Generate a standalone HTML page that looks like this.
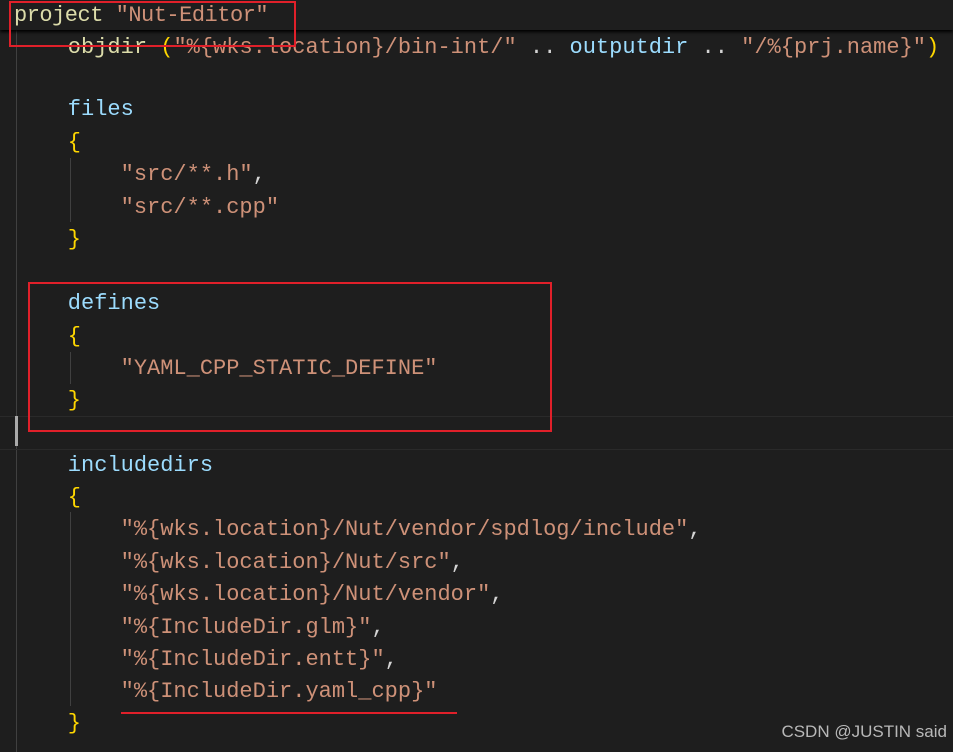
<!DOCTYPE html>
<html><head><meta charset="utf-8"><style>
body{margin:0;width:953px;height:752px;background:#1e1e1e;overflow:hidden;position:relative;font-family:"Liberation Mono",monospace;}
.l{position:absolute;left:15px;font-size:22px;line-height:32px;white-space:pre;color:#d4d4d4}
.k{color:#dcdcaa}.b{color:#9cdcfe}.s{color:#ce9178}.y{color:#ffd700}.w{color:#d4d4d4}
.g{position:absolute;width:1px;background:#404040}
.r{position:absolute;border:2px solid #e0202a}
</style></head><body>
<div class="g" style="left:16px;top:30px;height:722px"></div>
<div class="g" style="left:70px;top:158px;height:64px"></div>
<div class="g" style="left:70px;top:352px;height:32px"></div>
<div class="g" style="left:70px;top:512px;height:194px"></div>
<div style="position:absolute;left:0;top:416px;width:953px;height:32px;border-top:1px solid #2a2a2a;border-bottom:1px solid #2a2a2a"></div>
<div style="position:absolute;left:15px;top:416px;width:3px;height:30px;background:#aaa"></div>
<div class="l" style="top:32px"><span class="k">    objdir </span><span class="y">(</span><span class="s">"%{wks.location}/bin-int/"</span> .. <span class="b">outputdir</span> .. <span class="s">"/%{prj.name}"</span><span class="y">)</span></div>
<div class="l b" style="top:94px">    files</div>
<div class="l y" style="top:127px">    {</div>
<div class="l" style="top:159px"><span class="s">        "src/**.h"</span>,</div>
<div class="l s" style="top:192px">        "src/**.cpp"</div>
<div class="l y" style="top:224px">    }</div>
<div class="l b" style="top:288px">    defines</div>
<div class="l y" style="top:321px">    {</div>
<div class="l s" style="top:353px">        "YAML_CPP_STATIC_DEFINE"</div>
<div class="l y" style="top:385px">    }</div>
<div class="l b" style="top:450px">    includedirs</div>
<div class="l y" style="top:482px">    {</div>
<div class="l" style="top:514px"><span class="s">        "%{wks.location}/Nut/vendor/spdlog/include"</span>,</div>
<div class="l" style="top:547px"><span class="s">        "%{wks.location}/Nut/src"</span>,</div>
<div class="l" style="top:579px"><span class="s">        "%{wks.location}/Nut/vendor"</span>,</div>
<div class="l" style="top:612px"><span class="s">        "%{IncludeDir.glm}"</span>,</div>
<div class="l" style="top:644px"><span class="s">        "%{IncludeDir.entt}"</span>,</div>
<div class="l s" style="top:676px">        "%{IncludeDir.yaml_cpp}"</div>
<div class="l y" style="top:708px">    }</div>
<div style="position:absolute;left:0;top:0;width:953px;height:30px;background:#1e1e1e;box-shadow:0 2px 3px #000"></div>
<div class="l" style="top:0px;left:14px;font-size:22px;letter-spacing:-0.5px"><span class="k">project </span><span class="s">"Nut-Editor"</span></div>
<div class="r" style="left:9px;top:1px;width:283px;height:42px"></div>
<div class="r" style="left:28px;top:282px;width:520px;height:146px"></div>
<div style="position:absolute;left:121px;top:712px;width:336px;height:2px;background:#e0202a"></div>
<div style="position:absolute;right:6px;top:722px;font:17px 'Liberation Sans',sans-serif;color:#b8b8b8">CSDN @JUSTIN said</div>
</body></html>
